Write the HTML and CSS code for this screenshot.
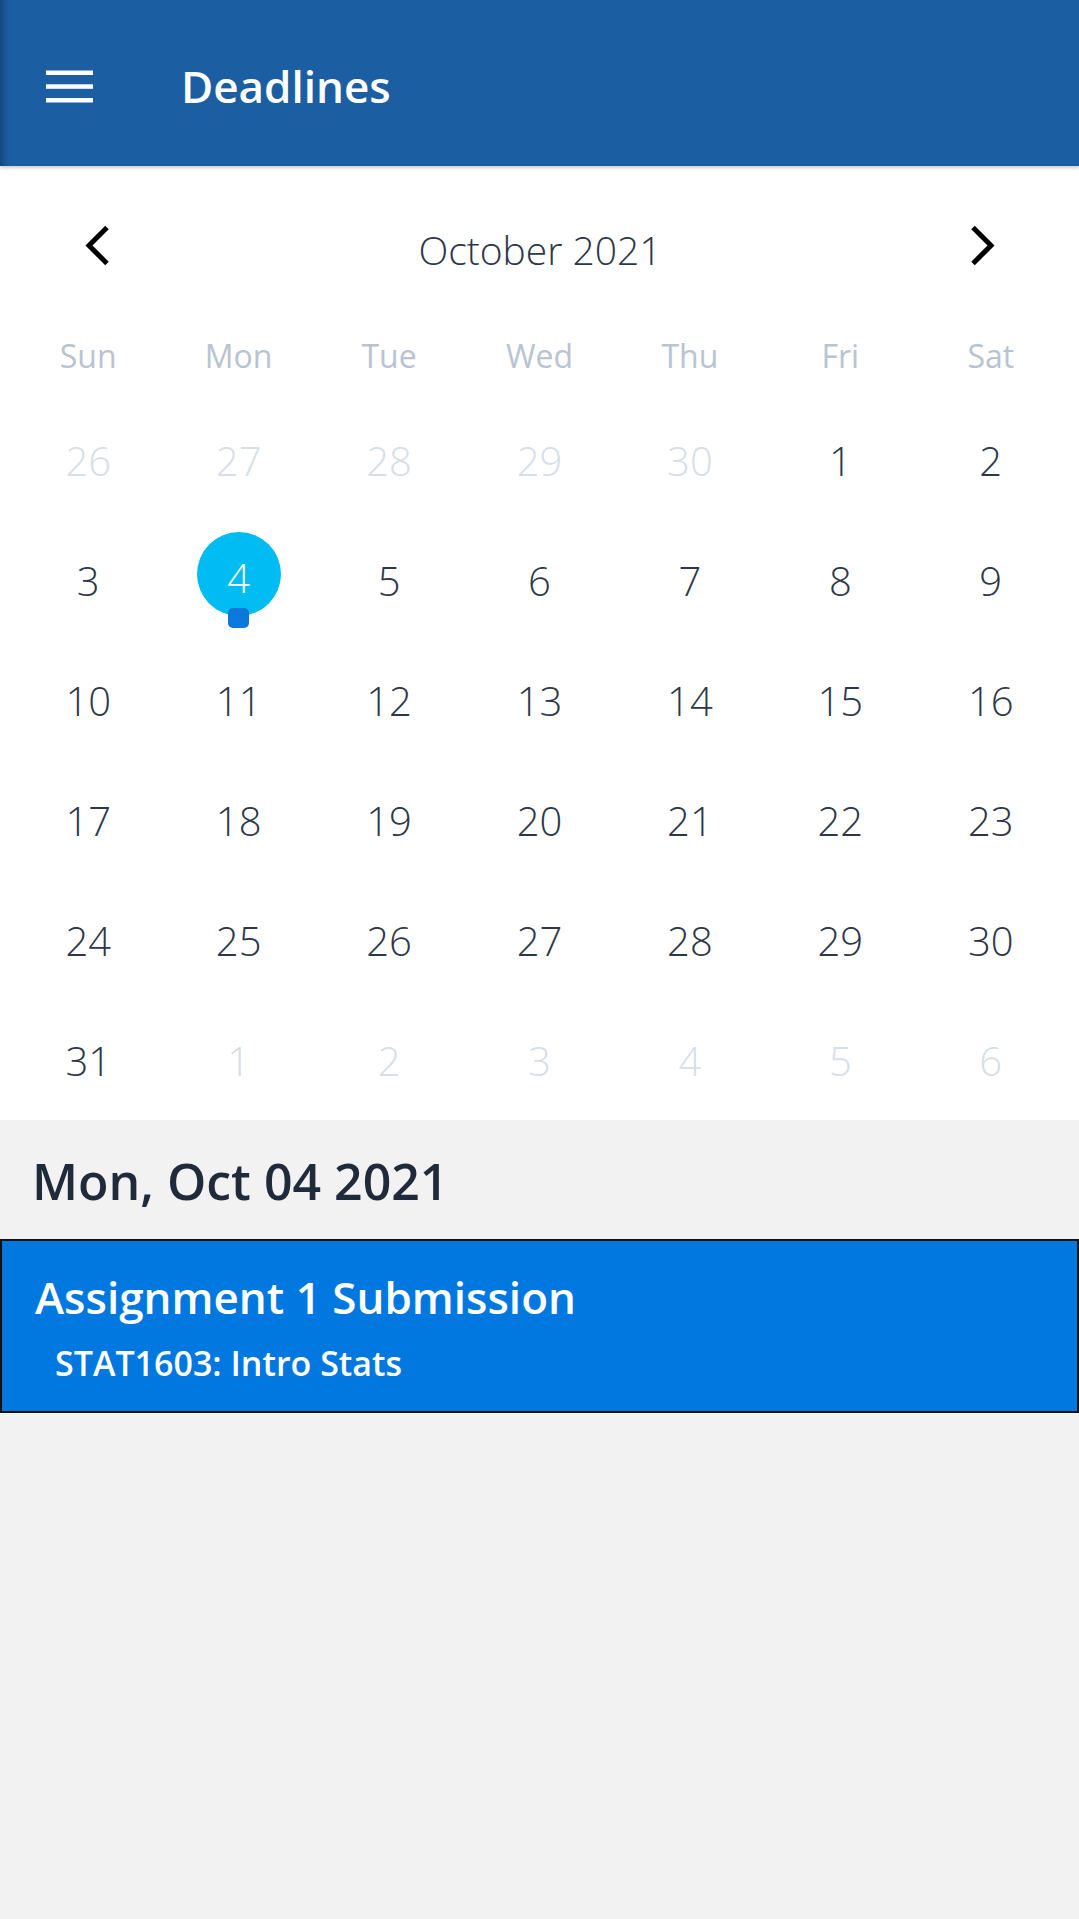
FILE: index.html
```html
<!DOCTYPE html>
<html lang="en">
  <head>
    <meta charset="UTF-8" />
    <meta name="viewport" content="width=device-width, initial-scale=1.0" />
    <title>Deadlines</title>
    <link rel="stylesheet" href="styles.css">
  </head>
  <body>
    <header class="app-bar">
      <button class="menu-btn" aria-label="Menu">
        <svg width="47" height="33" viewBox="0 0 47 33">
          <rect x="0" y="0.5" width="47" height="4.5" fill="#fff" />
          <rect x="0" y="14.3" width="47" height="4.5" fill="#fff" />
          <rect x="0" y="28" width="47" height="4.5" fill="#fff" />
        </svg>
      </button>
      <h1 class="app-title">Deadlines</h1>
    </header>

    <section class="calendar">
      <div class="cal-nav">
        <button class="nav-btn" aria-label="Previous month">
          <svg width="26" height="42" viewBox="0 0 26 42">
            <polyline points="22,2.5 4,20.5 22,38.5" fill="none" stroke="#000" stroke-width="5" />
          </svg>
        </button>
        <div class="cal-month">October 2021</div>
        <button class="nav-btn" aria-label="Next month">
          <svg width="26" height="42" viewBox="0 0 26 42">
            <polyline points="4,2.5 22,20.5 4,38.5" fill="none" stroke="#000" stroke-width="5" />
          </svg>
        </button>
      </div>

      <div class="weekdays">
        <span>Sun</span><span>Mon</span><span>Tue</span><span>Wed</span><span>Thu</span><span>Fri</span><span>Sat</span>
      </div>

      <div class="days">
        <div class="day muted">26</div>
        <div class="day muted">27</div>
        <div class="day muted">28</div>
        <div class="day muted">29</div>
        <div class="day muted">30</div>
        <div class="day">1</div>
        <div class="day">2</div>

        <div class="day">3</div>
        <div class="day selected">
          <span class="sel-circle">4</span>
          <span class="event-dot"></span>
        </div>
        <div class="day">5</div>
        <div class="day">6</div>
        <div class="day">7</div>
        <div class="day">8</div>
        <div class="day">9</div>

        <div class="day">10</div>
        <div class="day">11</div>
        <div class="day">12</div>
        <div class="day">13</div>
        <div class="day">14</div>
        <div class="day">15</div>
        <div class="day">16</div>

        <div class="day">17</div>
        <div class="day">18</div>
        <div class="day">19</div>
        <div class="day">20</div>
        <div class="day">21</div>
        <div class="day">22</div>
        <div class="day">23</div>

        <div class="day">24</div>
        <div class="day">25</div>
        <div class="day">26</div>
        <div class="day">27</div>
        <div class="day">28</div>
        <div class="day">29</div>
        <div class="day">30</div>

        <div class="day">31</div>
        <div class="day muted">1</div>
        <div class="day muted">2</div>
        <div class="day muted">3</div>
        <div class="day muted">4</div>
        <div class="day muted">5</div>
        <div class="day muted">6</div>
      </div>
    </section>

    <section class="agenda">
      <h2 class="agenda-date">Mon, Oct 04 2021</h2>
      <div class="deadline-card">
        <div class="deadline-title">Assignment 1 Submission</div>
        <div class="deadline-course">STAT1603: Intro Stats</div>
      </div>
    </section>
  </body>
</html>
```

FILE: styles.css
```css
html,
body {
  height: 100%;
}
body {
  margin: 0;
  font-family: "Open Sans", "Noto Sans", sans-serif;
  background: #f2f2f2;
  color: #2d3748;
}
button {
  background: none;
  border: 0;
  padding: 0;
  display: flex;
  cursor: pointer;
}

/* top bar */
.app-bar {
  height: 166px;
  box-sizing: border-box;
  padding: 6px 0 0 46px;
  display: flex;
  align-items: center;
  gap: 88px;
  background: #1b5fa2;
  box-shadow: 0 2px 3px rgba(0, 0, 0, 0.2), inset 10px 0 8px -8px rgba(0, 0, 0, 0.35);
  position: relative;
  z-index: 1;
}
.app-title {
  margin: 0;
  color: #fff;
  font-size: 44px;
  font-weight: 600;
  line-height: 1;
}

/* calendar */
.calendar {
  background: #fff;
  padding: 30px 13px 0;
}
.cal-nav {
  height: 100px;
  display: flex;
  align-items: center;
  justify-content: space-between;
  padding: 0 71px 0 72px;
}
.cal-month {
  font-size: 39px;
  font-weight: 300;
  color: #2d3748;
  padding-top: 6px;
}
.weekdays {
  height: 104px;
  box-sizing: border-box;
  padding-top: 14px;
  display: grid;
  grid-template-columns: repeat(7, 1fr);
  align-items: center;
  text-align: center;
  font-size: 32px;
  color: #b9c3d1;
}
.days {
  display: grid;
  grid-template-columns: repeat(7, 1fr);
  grid-auto-rows: 120px;
}
.day {
  display: flex;
  flex-direction: column;
  align-items: center;
  justify-content: center;
  font-size: 40px;
  font-weight: 300;
  color: #2d3748;
}
.day.muted {
  color: #d6dee7;
}
.sel-circle {
  width: 84px;
  height: 84px;
  border-radius: 50%;
  background: #00bcf2;
  color: #fff;
  display: flex;
  align-items: center;
  justify-content: center;
  padding-top: 6px;
  box-sizing: border-box;
}
.event-dot {
  width: 21px;
  height: 20px;
  margin-top: -8px;
  border-radius: 5px;
  background: #0a78dc;
}

/* selected day list */
.agenda {
  padding-top: 31px;
}
.agenda-date {
  margin: 0 0 28px;
  padding-left: 32px;
  font-size: 50px;
  font-weight: 600;
  line-height: 60px;
  color: #1f2a3a;
}
.deadline-card {
  background: #0078e0;
  border: 2px solid #111;
  padding: 30px 0 26px 33px;
  color: #fff;
  font-weight: 600;
}
.deadline-title {
  font-size: 44px;
  line-height: 52px;
}
.deadline-course {
  margin-top: 18px;
  padding-left: 20px;
  font-size: 34px;
  line-height: 44px;
}
```
